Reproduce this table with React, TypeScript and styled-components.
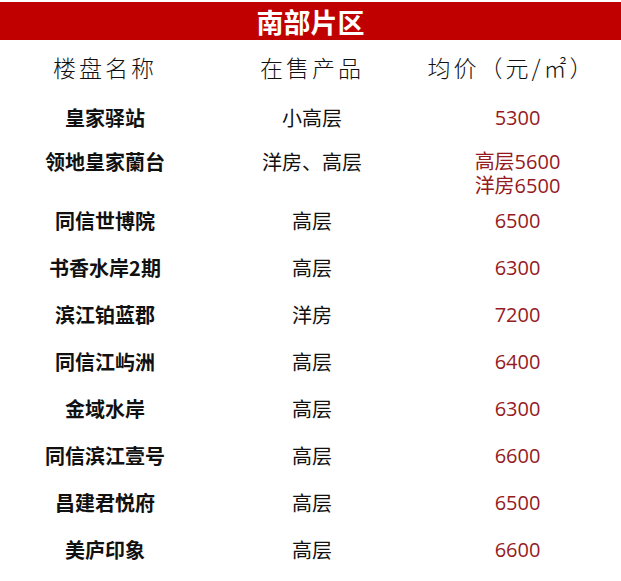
import React from "react";
import styled, { createGlobalStyle } from "styled-components";

const GlobalStyle = createGlobalStyle`
  html, body {
    margin: 0;
    padding: 0;
    background: #ffffff;
  }
  body {
    font-family: "Noto Sans CJK SC", "Noto Sans", sans-serif;
    color: #111;
  }
`;

interface IRow {
  name: string;
  product: string;
  prices: string[];
}

const rows: IRow[] = [
  { name: "皇家驿站", product: "小高层", prices: ["5300"] },
  { name: "领地皇家蘭台", product: "洋房、高层", prices: ["高层5600", "洋房6500"] },
  { name: "同信世博院", product: "高层", prices: ["6500"] },
  { name: "书香水岸2期", product: "高层", prices: ["6300"] },
  { name: "滨江铂蓝郡", product: "洋房", prices: ["7200"] },
  { name: "同信江屿洲", product: "高层", prices: ["6400"] },
  { name: "金域水岸", product: "高层", prices: ["6300"] },
  { name: "同信滨江壹号", product: "高层", prices: ["6600"] },
  { name: "昌建君悦府", product: "高层", prices: ["6500"] },
  { name: "美庐印象", product: "高层", prices: ["6600"] },
];

const Page = styled.div`
  width: 621px;
  height: 581px;
  padding-top: 2px;
  box-sizing: border-box;
  background: #fff;
  overflow: hidden;
`;

const TitleBar = styled.div`
  height: 38px;
  background: #c00000;
  display: flex;
  align-items: center;
  justify-content: center;
  color: #fff;
  font-size: 27px;
  font-weight: 700;
`;

const Grid = styled.div`
  display: grid;
  grid-template-columns: 210px 204px 1fr;
`;

const HeaderRow = styled(Grid)`
  height: 55px;
  align-items: center;
  padding-bottom: 2px;
  box-sizing: border-box;
`;

const HeaderCell = styled.div<{ $shift?: number }>`
  text-align: center;
  font-size: 23px;
  font-weight: 300;
  letter-spacing: 3px;
  color: #111;
  font-family: "Noto Sans CJK SC", serif;
  padding-right: ${(p) => p.$shift ?? 0}px;
`;

const Row = styled(Grid)<{ $multi?: boolean }>`
  align-items: start;
  padding: ${(p) => (p.$multi ? "8px 0 0" : "11px 0 12px")};
  line-height: 24px;
`;

const NameCell = styled.div`
  text-align: center;
  font-size: 20px;
  font-weight: 700;
  color: #111;
`;

const ProductCell = styled.div`
  text-align: center;
  font-size: 20px;
  font-weight: 400;
  color: #111;
`;

const PriceCell = styled.div`
  text-align: center;
  font-size: 20px;
  color: #951a22;
  font-family: "Open Sans", "Noto Sans CJK SC", sans-serif;
  display: flex;
  flex-direction: column;
`;

export default function App() {
  return (
    <Page>
      <GlobalStyle />
      <TitleBar>南部片区</TitleBar>
      <HeaderRow>
        <HeaderCell>楼盘名称</HeaderCell>
        <HeaderCell>在售产品</HeaderCell>
        <HeaderCell $shift={12}>均价（元/㎡）</HeaderCell>
      </HeaderRow>
      {rows.map((r) => (
        <Row key={r.name} $multi={r.prices.length > 1}>
          <NameCell>{r.name}</NameCell>
          <ProductCell>{r.product}</ProductCell>
          <PriceCell>
            {r.prices.map((p) => (
              <span key={p}>{p}</span>
            ))}
          </PriceCell>
        </Row>
      ))}
    </Page>
  );
}
